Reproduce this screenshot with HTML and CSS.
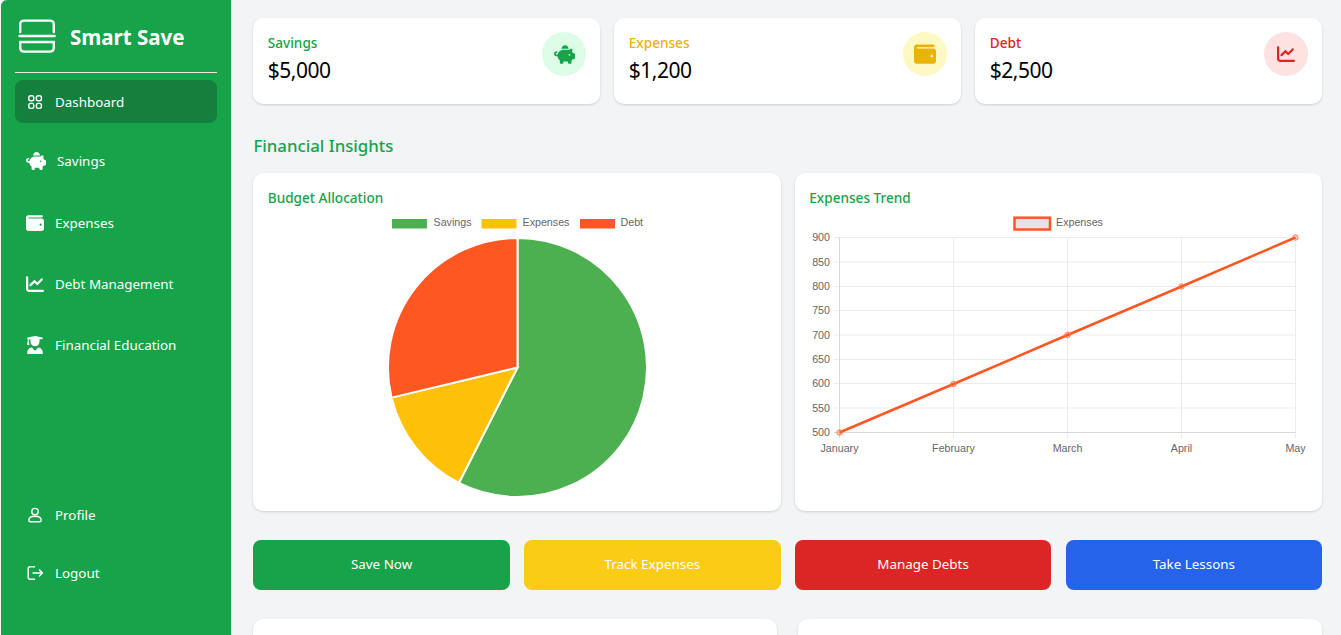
FILE: index.html
```html
<!DOCTYPE html>
<html lang="en">
<head>
<meta charset="utf-8">
<title>Smart Save</title>
<link rel="stylesheet" href="styles.css">
</head>
<body>
<svg class="sprite" aria-hidden="true">
  <symbol id="i-piggy" viewBox="0 0 576 512"><path d="M400 96l0 .7c-5.3-.4-10.6-.7-16-.7H256c-16.5 0-32.5 2.1-47.8 6c-.1-2-.2-4-.2-6c0-53 43-96 96-96s96 43 96 96zm-16 32c3.5 0 7 .1 10.4 .3c4.2 .3 8.4 .7 12.6 1.3C424.6 109.1 450.8 96 480 96h11.5c10.4 0 18 9.8 15.5 19.9l-13.8 55.2c15.8 14.8 28.7 32.8 37.5 52.9H544c17.7 0 32 14.3 32 32v96c0 17.7-14.3 32-32 32H512c-9.1 12.1-19.9 22.9-32 32v64c0 17.7-14.3 32-32 32H416c-17.7 0-32-14.3-32-32V448H256v32c0 17.7-14.3 32-32 32H192c-17.7 0-32-14.3-32-32V416c-34.9-26.2-58.7-66.3-63.2-112H68c-37.6 0-68-30.4-68-68s30.4-68 68-68h4c13.3 0 24 10.7 24 24s-10.7 24-24 24H68c-11 0-20 9-20 20s9 20 20 20H99.2c12.1-59.8 57.7-107.5 116.3-122.8c12.9-3.4 26.5-5.2 40.5-5.2H384zm64 136a24 24 0 1 0 -48 0 24 24 0 1 0 48 0z"/></symbol>
  <symbol id="i-wallet" viewBox="0 0 512 512"><path d="M64 32C28.7 32 0 60.7 0 96V416c0 35.3 28.7 64 64 64H448c35.3 0 64-28.7 64-64V192c0-35.3-28.7-64-64-64H80c-8.8 0-16-7.2-16-16s7.2-16 16-16H448c17.7 0 32-14.3 32-32s-14.3-32-32-32H64zM416 272a32 32 0 1 1 0 64 32 32 0 1 1 0-64z"/></symbol>
  <symbol id="i-chart" viewBox="0 0 512 512"><path d="M64 64c0-17.7-14.3-32-32-32S0 46.3 0 64V400c0 44.2 35.8 80 80 80H480c17.7 0 32-14.3 32-32s-14.3-32-32-32H80c-8.8 0-16-7.2-16-16V64zm406.6 86.6c12.5-12.5 12.5-32.8 0-45.3s-32.8-12.5-45.3 0L320 210.7l-57.4-57.4c-12.5-12.5-32.8-12.5-45.3 0l-112 112c-12.5 12.5-12.5 32.8 0 45.3s32.8 12.5 45.3 0L240 221.3l57.4 57.4c12.5 12.5 32.8 12.5 45.3 0l128-128z"/></symbol>
  <symbol id="i-grad" viewBox="0 0 448 512"><path d="M219.3 .5c3.1-.6 6.3-.6 9.4 0l200 40C439.9 42.7 448 52.6 448 64s-8.1 21.3-19.3 23.5L352 102.9V160c0 70.7-57.3 128-128 128s-128-57.3-128-128V102.9L48 93.3v65.1l15.7 78.4c.9 4.7-.3 9.6-3.3 13.3s-7.6 5.9-12.4 5.9H16c-4.8 0-9.3-2.1-12.4-5.9s-4.3-8.6-3.3-13.3L16 158.4V86.6C6.5 83.3 0 74.3 0 64C0 52.6 8.1 42.7 19.3 40.5l200-40zM111.9 327.7c10.5-3.4 21.8 .4 29.4 8.5l71 75.5c6.3 6.7 17 6.7 23.3 0l71-75.5c7.6-8.1 20-11.9 29.4-8.5C401 348.6 448 409.4 448 481.3c0 17-13.8 30.7-30.7 30.7H30.7C13.8 512 0 498.2 0 481.3c0-71.9 47-132.7 111.9-153.6z"/></symbol>
</svg>

<div class="app">
  <aside class="sidebar">
    <div class="brand">
      <svg class="brand-logo" viewBox="0 0 38 34" fill="none" stroke="#fff" stroke-width="2.4" stroke-linecap="round" stroke-linejoin="round">
        <path d="M2.2 13V5.2a3.6 3.6 0 0 1 3.6-3.6h26.4a3.6 3.6 0 0 1 3.6 3.6V13"/>
        <path d="M1.5 17h35"/>
        <path d="M2.2 23h33.6v6a3.6 3.6 0 0 1-3.6 3.6H5.8A3.6 3.6 0 0 1 2.2 29z"/>
      </svg>
      <span class="brand-name">Smart Save</span>
    </div>
    <nav class="nav">
      <a class="nav-item active">
        <svg class="nav-icon" viewBox="0 0 18 18" fill="none" stroke="#fff" stroke-width="1.4">
          <rect x="2.8" y="2.8" width="5" height="5" rx="1.8"/><rect x="10.4" y="2.8" width="5" height="5" rx="1.8"/>
          <rect x="2.8" y="10.4" width="5" height="5" rx="1.8"/><rect x="10.4" y="10.4" width="5" height="5" rx="1.8"/>
        </svg>
        <span>Dashboard</span>
      </a>
      <a class="nav-item nav-item-piggy"><svg class="nav-icon nav-icon-solid nav-icon-wide"><use href="#i-piggy"/></svg><span>Savings</span></a>
      <a class="nav-item"><svg class="nav-icon nav-icon-solid"><use href="#i-wallet"/></svg><span>Expenses</span></a>
      <a class="nav-item"><svg class="nav-icon nav-icon-solid"><use href="#i-chart"/></svg><span>Debt Management</span></a>
      <a class="nav-item"><svg class="nav-icon nav-icon-solid"><use href="#i-grad"/></svg><span>Financial Education</span></a>
    </nav>
    <nav class="nav-bottom">
      <a class="nav-item">
        <svg class="nav-icon" viewBox="0 0 18 18" fill="none" stroke="#fff" stroke-width="1.4" stroke-linejoin="round">
          <circle cx="9" cy="5.6" r="3.2"/>
          <path d="M2.8 14.2c0-2.6 2.6-4 6.200-4s6.200 1.400 6.200 4c0 .9-.6 1.500-1.500 1.500H4.300c-.9 0-1.500-.6-1.500-1.500z"/>
        </svg>
        <span>Profile</span>
      </a>
      <a class="nav-item">
        <svg class="nav-icon" viewBox="0 0 18 18" fill="none" stroke="#fff" stroke-width="1.4" stroke-linecap="round" stroke-linejoin="round">
          <path d="M8.500 2.800H4.200a2 2 0 0 0-2 2v8.400a2 2 0 0 0 2 2h4.300"/>
          <path d="M7 9h9.500M13.500 6l3 3-3 3"/>
        </svg>
        <span>Logout</span>
      </a>
    </nav>
  </aside>

  <main class="main">
    <section class="stats">
      <div class="card stat">
        <div><div class="stat-label text-green">Savings</div><div class="stat-value">$5,000</div></div>
        <div class="stat-circle bg-green"><svg class="stat-icon-piggy fill-green"><use href="#i-piggy"/></svg></div>
      </div>
      <div class="card stat">
        <div><div class="stat-label text-yellow">Expenses</div><div class="stat-value">$1,200</div></div>
        <div class="stat-circle bg-yellow"><svg class="stat-icon-wallet fill-yellow"><use href="#i-wallet"/></svg></div>
      </div>
      <div class="card stat">
        <div><div class="stat-label text-red">Debt</div><div class="stat-value">$2,500</div></div>
        <div class="stat-circle bg-red"><svg class="stat-icon-chart fill-red"><use href="#i-chart"/></svg></div>
      </div>
    </section>

    <h2 class="section-title">Financial Insights</h2>

    <section class="charts">
      <div class="card chart-card">
        <h3 class="chart-title">Budget Allocation</h3>
        <svg class="chart" viewBox="0 0 498 290">
          <rect x="124" y="7" width="35" height="9.500" fill="#4caf50"/>
          <text class="chart-text" x="165.500" y="13.800">Savings</text>
          <rect x="213.500" y="7" width="35" height="9.500" fill="#ffc107"/>
          <text class="chart-text" x="254.500" y="13.800">Expenses</text>
          <rect x="312" y="7" width="35" height="9.500" fill="#ff5722"/>
          <text class="chart-text" x="352.500" y="13.800">Debt</text>
          <g stroke="#fff" stroke-width="2">
            <path fill="#4caf50" d="M249.500 155.500V26A129.500 129.500 0 1 1 190.900 271Z"/>
            <path fill="#ffc107" d="M249.500 155.500L190.900 271A129.500 129.500 0 0 1 123.500 185.600Z"/>
            <path fill="#ff5722" d="M249.500 155.500L123.500 185.600A129.500 129.500 0 0 1 249.500 26Z"/>
          </g>
        </svg>
      </div>
      <div class="card chart-card">
        <h3 class="chart-title">Expenses Trend</h3>
        <svg class="chart" viewBox="-1 0 498 290">
          <rect x="204.500" y="5.700" width="35.500" height="11.800" fill="#e4e4e4" stroke="#ff5722" stroke-width="2.500"/>
          <text class="chart-text" x="246" y="14">Expenses</text>
          <g class="grid">
            <path d="M24 25.500H485.500M24 50H485.500M24 74.500H485.500M24 98.500H485.500M24 123H485.500M24 147.500H485.500M24 171.500H485.500M24 196H485.500"/>
            <path d="M143.500 25.500V226M257.500 25.500V226M371.500 25.500V226M485.500 25.500V226"/>
          </g>
          <path class="axis" d="M24 220.500H485.500M29.500 25.500V226"/>
          <g class="chart-text ticks-y">
            <text x="20" y="29">900</text><text x="20" y="53.500">850</text><text x="20" y="78">800</text>
            <text x="20" y="102">750</text><text x="20" y="126.500">700</text><text x="20" y="151">650</text>
            <text x="20" y="175">600</text><text x="20" y="199.500">550</text><text x="20" y="224">500</text>
          </g>
          <g class="chart-text ticks-x">
            <text x="29.500" y="240">January</text><text x="143.500" y="240">February</text>
            <text x="257.500" y="240">March</text><text x="371.500" y="240">April</text><text x="485.500" y="240">May</text>
          </g>
          <path class="line" d="M29.500 220.500L143.500 172L257.500 123L371.500 74.500L485.500 25.500"/>
          <g class="points">
            <circle cx="29.500" cy="220.500" r="2.700"/><circle cx="143.500" cy="172" r="2.700"/><circle cx="257.500" cy="123" r="2.700"/>
            <circle cx="371.500" cy="74.500" r="2.700"/><circle cx="485.500" cy="25.500" r="2.700"/>
          </g>
        </svg>
      </div>
    </section>

    <section class="actions">
      <button class="action bg-action-green">Save Now</button>
      <button class="action bg-action-yellow">Track Expenses</button>
      <button class="action bg-action-red">Manage Debts</button>
      <button class="action bg-action-blue">Take Lessons</button>
    </section>

    <section class="lower">
      <div class="card lower-card"></div>
      <div class="card lower-card"></div>
    </section>
  </main>
</div>
</body>
</html>
```
FILE: styles.css
```css
* { box-sizing: border-box; }
html, body { height: 100%; }
body {
  margin: 0;
  padding-left: 1px;
  overflow: hidden;
  background: #f3f4f6;
  font-family: "Noto Sans", "Open Sans", sans-serif;
  color: #000;
}
.sprite { width: 0; height: 0; position: absolute; }
.app { display: flex; height: 635px; overflow: hidden; }

/* sidebar */
.sidebar {
  flex: 0 0 230px;
  display: flex;
  flex-direction: column;
  padding: 0 14px;
  background: #16a34a;
  color: #fff;
  border-top-left-radius: 6px;
}
.brand {
  display: flex;
  align-items: center;
  gap: 14px;
  height: 73px;
  padding: 0 0 1px 3px;
  border-bottom: 1px solid #e5e7eb;
}
.brand-logo { width: 38px; height: 34px; flex: none; }
.brand-name { padding-top: 3px; font-size: 20.5px; font-weight: 700; white-space: nowrap; }
.nav { display: flex; flex-direction: column; gap: 18px; margin-top: 7px; }
.nav-bottom { display: flex; flex-direction: column; gap: 15px; margin-top: auto; margin-bottom: 40px; }
.nav-item {
  display: flex;
  align-items: center;
  gap: 11px;
  height: 43px;
  padding: 0 0 2px 11px;
  border-radius: 8px;
  font-size: 13.4px;
  color: #fff;
}
.nav-item.active { padding-bottom: 0; background: #15803d; }
.nav-item-piggy { height: 41px; margin-bottom: 2px; }
.nav-icon { width: 18px; height: 18px; flex: none; }
.nav-icon-solid { fill: #fff; }
.nav-icon-wide { width: 20px; }

/* main */
.main { flex: 1; min-width: 0; padding: 18px 19px 0 22.4px; }
.card {
  background: #fff;
  border-radius: 10px;
  box-shadow: 0 1px 3px rgba(0, 0, 0, .1), 0 1px 2px rgba(0, 0, 0, .06);
}
.stats { display: grid; grid-template-columns: repeat(3, 1fr); gap: 14.4px; }
.stat {
  display: flex;
  justify-content: space-between;
  align-items: flex-start;
  height: 86px;
  padding: 14px 14.4px;
}
.stat-label { font-size: 13.6px; font-weight: 500; line-height: 22px; }
.stat-value { font-size: 21px; letter-spacing: -.5px; line-height: 32px; }
.stat-circle {
  display: flex;
  align-items: center;
  justify-content: center;
  width: 43.2px;
  height: 44px;
  border-radius: 50%;
}
.stat-icon-piggy { width: 21px; height: 19px; }
.stat-icon-wallet { width: 22px; height: 22px; }
.stat-icon-chart { width: 18px; height: 18px; }
.text-green { color: #16a34a; }
.text-yellow { color: #eab308; }
.text-red { color: #dc2626; }
.bg-green { background: #dcfce7; }
.bg-yellow { background: #fef9c3; }
.bg-red { background: #fee2e2; }
.fill-green { fill: #16a34a; }
.fill-yellow { fill: #eab308; }
.fill-red { fill: #dc2626; }

.section-title {
  margin: 28px 0 14px;
  font-size: 16.8px;
  font-weight: 500;
  line-height: 27px;
  color: #16a34a;
}
.charts { display: grid; grid-template-columns: repeat(2, 1fr); gap: 14.4px; }
.chart-card { height: 338px; padding: 15px 14.4px 0; }
.chart-title { margin: 0; font-size: 13.6px; font-weight: 500; line-height: 20px; color: #16a34a; }
.chart { display: block; width: 498px; height: 290px; margin-top: 4px; opacity: .999; }
.chart-text { font-family: "Liberation Sans", Arial, sans-serif; font-size: 10.7px; fill: #666; }
.ticks-y { text-anchor: end; }
.ticks-x { text-anchor: middle; }
.grid { fill: none; stroke: #ebebeb; stroke-width: 1; }
.axis { fill: none; stroke: #d9d9d9; stroke-width: 1; }
.line { fill: none; stroke: #ff5722; stroke-width: 2.5; }
.points circle { fill: rgba(255, 87, 34, .25); stroke: #ff7a50; stroke-width: 1; }

.actions { display: grid; grid-template-columns: repeat(4, 1fr); gap: 14.4px; margin-top: 29px; }
.action {
  height: 50px;
  padding: 0 0 2px;
  border: 0;
  border-radius: 8px;
  font: inherit;
  font-size: 13.4px;
  color: #fff;
}
.bg-action-green { background: #16a34a; }
.bg-action-yellow { background: #facc15; }
.bg-action-red { background: #dc2626; }
.bg-action-blue { background: #2563eb; }

.lower { display: grid; grid-template-columns: repeat(2, 1fr); gap: 21.6px; margin-top: 29px; }
.lower-card { height: 200px; }
```
